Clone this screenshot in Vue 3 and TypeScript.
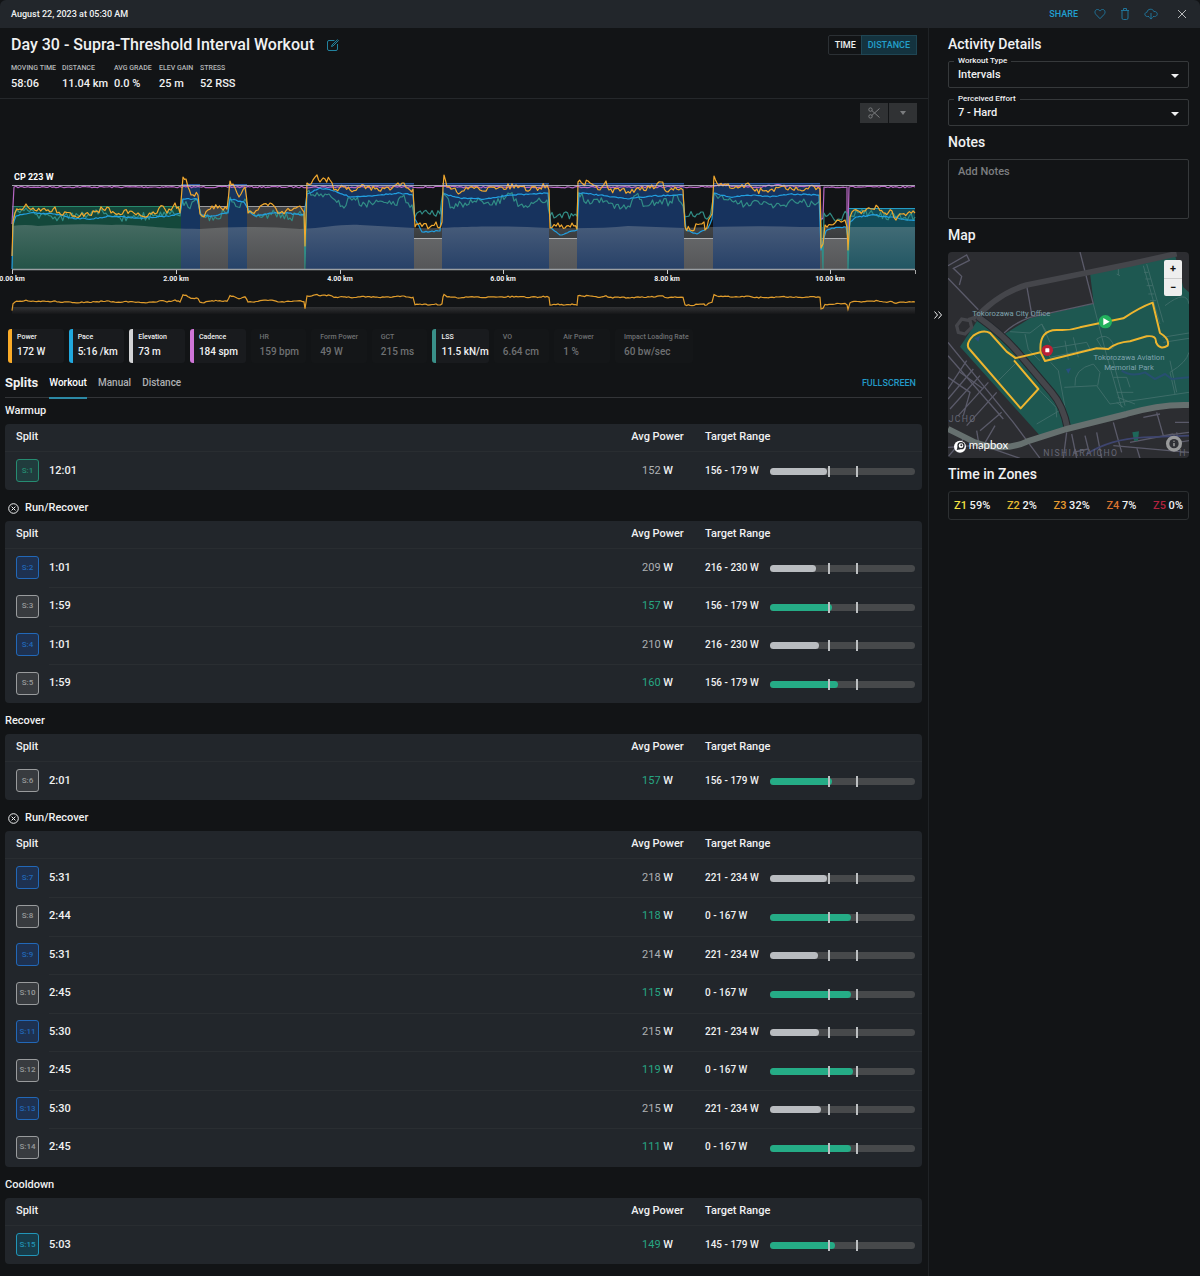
<script setup lang="ts">
import { ref } from 'vue'

type Point = [number, number]
interface Split { id: number; kind: 'green' | 'blue' | 'grey' | 'cyan'; time: string; power: number; hit: boolean; range: string; fill: number }
interface Group { name: string; repeat?: boolean; splits: Split[] }

const s = (id: number, kind: Split['kind'], time: string, power: number, hit: boolean, range: string, fill: number): Split =>
  ({ id, kind, time, power, hit, range, fill })

const groups: Group[] = [
  { name: 'Warmup', splits: [s(1, 'green', '12:01', 152, false, '156 - 179 W', 39)] },
  { name: 'Run/Recover', repeat: true, splits: [
    s(2, 'blue', '1:01', 209, false, '216 - 230 W', 32),
    s(3, 'grey', '1:59', 157, true, '156 - 179 W', 43),
    s(4, 'blue', '1:01', 210, false, '216 - 230 W', 34),
    s(5, 'grey', '1:59', 160, true, '156 - 179 W', 47)] },
  { name: 'Recover', splits: [s(6, 'grey', '2:01', 157, true, '156 - 179 W', 43)] },
  { name: 'Run/Recover', repeat: true, splits: [
    s(7, 'blue', '5:31', 218, false, '221 - 234 W', 39),
    s(8, 'grey', '2:44', 118, true, '0 - 167 W', 56),
    s(9, 'blue', '5:31', 214, false, '221 - 234 W', 33),
    s(10, 'grey', '2:45', 115, true, '0 - 167 W', 56),
    s(11, 'blue', '5:30', 215, false, '221 - 234 W', 34),
    s(12, 'grey', '2:45', 119, true, '0 - 167 W', 57),
    s(13, 'blue', '5:30', 215, false, '221 - 234 W', 35),
    s(14, 'grey', '2:45', 111, true, '0 - 167 W', 56)] },
  { name: 'Cooldown', splits: [s(15, 'cyan', '5:03', 149, true, '145 - 179 W', 45)] },
]

const stats = [['MOVING TIME', '58:06'], ['DISTANCE', '11.04 km'], ['AVG GRADE', '0.0 %'], ['ELEV GAIN', '25 m'], ['STRESS', '52 RSS']]
const metrics = ref([
  { name: 'Power', value: '172 W', color: '#f9ab28' },
  { name: 'Pace', value: '5:16 /km', color: '#21a8de' },
  { name: 'Elevation', value: '73 m', color: '#d3d4d6' },
  { name: 'Cadence', value: '184 spm', color: '#cf75d8' },
  { name: 'HR', value: '159 bpm', color: '' },
  { name: 'Form Power', value: '49 W', color: '' },
  { name: 'GCT', value: '215 ms', color: '' },
  { name: 'LSS', value: '11.5 kN/m', color: '#3a9089' },
  { name: 'VO', value: '6.64 cm', color: '' },
  { name: 'Air Power', value: '1 %', color: '' },
  { name: 'Impact Loading Rate', value: '60 bw/sec', color: '' },
])
const zones = [['Z1', '59%', '#f5e342'], ['Z2', '2%', '#e6bb32'], ['Z3', '32%', '#e59a31'], ['Z4', '7%', '#d9722f'], ['Z5', '0%', '#b3233f']]
const axis: [string, number][] = [['0.00 km', 12], ['2.00 km', 176], ['4.00 km', 340], ['6.00 km', 503], ['8.00 km', 667], ['10.00 km', 830]]

// Planned workout blocks: start, end, top, fill, top line
const blocks: [number, number, number, string, string][] = [
  [12, 181, 206, '#14483b', '#288a6d'], [181, 200, 184, '#16355f', '#2c569b'], [200, 228, 206, '#414244', '#9b9c9e'],
  [228, 247, 184, '#16355f', '#2c569b'], [247, 305, 206, '#414244', '#9b9c9e'], [306, 414, 183, '#17335e', '#2c569b'],
  [414, 442, 238, '#4a4b4d', '#a7a8aa'], [442, 549, 183, '#17335e', '#2c569b'], [549, 577, 238, '#4a4b4d', '#a7a8aa'],
  [577, 684, 183, '#17335e', '#2c569b'], [684, 713, 238, '#4a4b4d', '#a7a8aa'], [713, 820, 183, '#17335e', '#2c569b'],
  [820, 848, 238, '#4a4b4d', '#a7a8aa'], [848, 915, 208, '#114b59', '#249cc4'],
]

const power: Point[] = [[12, 256], [13, 222], [15, 213], [20, 209], [26, 204], [33, 208], [50, 212], [55, 207], [57, 213], [80, 216], [95, 212], [107, 207], [111, 213], [130, 211], [140, 215], [155, 214], [163, 206], [167, 213], [175, 203], [180, 213], [183, 177], [186, 179], [188, 187], [191, 195], [198, 195], [200, 214], [204, 217], [212, 206], [227, 209], [230, 181], [233, 184], [239, 197], [245, 187], [248, 213], [258, 210], [270, 203], [280, 213], [300, 206], [304, 212], [305, 246], [307, 183], [311, 184], [317, 175], [320, 182], [325, 179], [330, 180], [334, 190], [345, 187], [350, 190], [360, 187], [375, 189], [390, 190], [402, 183], [410, 190], [413, 189], [415, 227], [420, 223], [430, 227], [436, 222], [439, 228], [442, 222], [443, 188], [444, 175], [447, 187], [455, 188], [460, 193], [470, 187], [480, 190], [500, 187], [520, 186], [530, 190], [547, 185], [549, 190], [550, 228], [558, 223], [565, 228], [572, 223], [577, 229], [578, 182], [583, 184], [588, 181], [600, 190], [606, 181], [609, 190], [620, 191], [640, 190], [650, 188], [661, 182], [668, 192], [675, 187], [683, 190], [685, 227], [690, 230], [700, 224], [704, 222], [705, 230], [712, 214], [714, 176], [717, 183], [725, 184], [730, 188], [740, 187], [748, 183], [755, 191], [770, 190], [780, 187], [800, 190], [810, 186], [820, 189], [821, 248], [823, 244], [825, 225], [835, 223], [845, 220], [847, 227], [848, 250], [850, 217], [852, 212], [865, 211], [878, 207], [885, 213], [892, 211], [896, 220], [902, 214], [915, 213]]
const pace: Point[] = [[12, 269], [13, 225], [16, 216], [30, 213], [55, 214], [70, 218], [92, 219], [110, 216], [140, 218], [170, 216], [180, 213], [183, 199], [197, 199], [201, 215], [212, 216], [228, 213], [230, 199], [244, 202], [249, 211], [255, 216], [270, 213], [285, 213], [304, 215], [307, 194], [320, 188], [335, 191], [350, 197], [380, 195], [400, 193], [413, 195], [415, 219], [422, 232], [440, 231], [443, 194], [460, 198], [485, 199], [510, 195], [548, 193], [551, 228], [560, 235], [577, 230], [579, 193], [600, 195], [628, 199], [650, 196], [683, 195], [686, 230], [697, 234], [708, 228], [712, 219], [714, 193], [730, 197], [755, 195], [770, 197], [790, 194], [819, 195], [821, 250], [826, 231], [832, 228], [846, 227], [848, 238], [850, 222], [856, 217], [875, 215], [890, 217], [908, 220], [915, 220]]
const lss: Point[] = [[13, 220], [18, 211], [26, 208], [35, 214], [55, 217], [80, 216], [96, 210], [108, 216], [130, 218], [155, 215], [164, 212], [180, 216], [182, 199], [188, 207], [194, 201], [198, 201], [202, 217], [215, 217], [228, 211], [230, 197], [238, 207], [245, 199], [249, 213], [260, 217], [275, 213], [290, 218], [304, 214], [305, 269], [307, 192], [325, 194], [335, 200], [344, 208], [350, 198], [365, 204], [380, 201], [395, 205], [402, 197], [412, 205], [415, 217], [422, 214], [440, 214], [443, 192], [452, 207], [465, 203], [480, 200], [490, 205], [510, 194], [520, 205], [535, 202], [547, 200], [550, 216], [560, 214], [577, 216], [578, 192], [590, 204], [605, 201], [620, 209], [630, 207], [636, 195], [645, 206], [660, 200], [672, 203], [675, 195], [683, 206], [685, 217], [697, 214], [709, 217], [712, 205], [714, 193], [728, 200], [745, 205], [760, 204], [775, 206], [788, 203], [800, 201], [815, 205], [820, 200], [823, 269], [824, 213], [838, 219], [847, 214], [848, 269], [850, 216], [860, 212], [875, 215], [890, 216], [915, 217]]
const cadence: Point[] = [[12, 224], [14, 187], [713, 187], [720, 184], [730, 186], [760, 187], [775, 185], [798, 187], [820, 186], [821, 220], [823, 218], [824, 187], [847, 187], [847, 229], [848, 229], [849, 187], [915, 187]]

function trace(keys: Point[], amplitude: number, seed: number): Point[] {
  let state = seed
  const rand = () => {
    state = (state * 16807) % 2147483647
    return state / 2147483647 - 0.5
  }
  const out: Point[] = [keys[0]]
  for (let i = 1; i < keys.length; i++) {
    const [x0, y0] = keys[i - 1]
    const [x1, y1] = keys[i]
    const n = Math.max(1, Math.round((x1 - x0) / 2))
    for (let k = 1; k < n; k++) {
      const t = k / n
      out.push([x0 + (x1 - x0) * t, y0 + (y1 - y0) * t + rand() * amplitude * 2])
    }
    out.push([x1, y1])
  }
  return out
}
const line = (points: Point[]) => points.map(([x, y]) => `${x.toFixed(1)},${y.toFixed(1)}`).join(' ')

const powerTrace = trace(power, 2.8, 41)
const overview = powerTrace.map(([x, y]): Point => [x, 302 + (y - 213) * 0.2])
const traces = [
  { color: '#b766c4', points: line(trace(cadence, 0.8, 7)) },
  { color: '#318d86', points: line(trace(lss, 4, 99)) },
  { color: '#229fe0', points: line(trace(pace, 0.6, 12)) },
  { color: '#f2a92e', points: line(powerTrace) },
]
const hill = 'M12 226 Q25 224 38 226 Q75 223 112 225 C140 224 155 229 200 229 Q245 225 300 229 C325 228 340 224 360 225 L414 228 C450 229 470 224 549 228 Q600 229 628 226 L684 228 Q750 225 800 227 L915 227 V269 H12Z'

const tabs = ['Workout', 'Manual', 'Distance']
const tab = ref('Workout')
const mode = ref('DISTANCE')
const workoutType = ref('Intervals')
const effort = ref('7 - Hard')
</script>

<template>
  <div class="app">
    <header class="topbar">
      <time>August 22, 2023 at 05:30 AM</time>
      <div class="actions">
        <button class="share">SHARE</button>
        <button aria-label="Favourite"><svg width="12" height="12" viewBox="0 0 12 12"><path d="M6 10.7 1.8 6.3C.2 4.500 1 1.500 3.400 1.500 4.700 1.500 5.500 2.300 6 3.100 6.500 2.300 7.300 1.500 8.600 1.500 11 1.500 11.800 4.500 10.200 6.300Z" /></svg></button>
        <button aria-label="Delete"><svg width="12" height="14" viewBox="0 0 12 14"><path d="M2 3.500h8M3 3.500v7.500q0 1.500 1.500 1.500h3q1.500 0 1.500-1.500V3.500M4.500 3.300V1.500h3v1.800" /></svg></button>
        <button aria-label="Download"><svg width="14" height="12" viewBox="0 0 14 12"><path d="M5 8.500H3.500C.2 8.500 0 4.500 3 4.300 3.300.5 9 .2 9.800 3.500 14 3 14.500 8.500 10.500 8.500H9M7 5v6M5.300 9.400 7 11.100l1.700-1.700" /></svg></button>
        <button class="close" aria-label="Close"><svg width="12" height="12" viewBox="0 0 12 12"><path d="m2 2 8 8M10 2 2 10" /></svg></button>
      </div>
    </header>

    <div class="body">
      <main>
        <section class="summary">
          <div class="titles">
            <h1>Day 30 - Supra-Threshold Interval Workout
              <button aria-label="Edit title"><svg width="12" height="12" viewBox="0 0 12 12"><path d="M7.500 1.500H2Q.5 1.500.5 3v7Q.5 11.500 2 11.500h7Q10.500 11.500 10.500 10V5M4.500 7.500 5 6l5.500-5.300.9.900L6 7Z" /></svg></button>
            </h1>
            <dl>
              <div v-for="[label, value] in stats" :key="label"><dt>{{ label }}</dt><dd>{{ value }}</dd></div>
            </dl>
          </div>
          <div class="toggle">
            <button v-for="m in ['TIME', 'DISTANCE']" :key="m" :class="{ on: mode === m }" @click="mode = m">{{ m }}</button>
          </div>
        </section>

        <div class="tools">
          <button aria-label="Cut"><svg width="12" height="12" viewBox="0 0 12 12"><circle cx="2.500" cy="2.600" r="1.700" /><circle cx="2.500" cy="9.400" r="1.700" /><path d="M3.900 3.600 11.500 10.500M3.900 8.400 11.500 1.500" /></svg></button>
          <button aria-label="More"><i class="caret"></i></button>
        </div>

        <svg class="chart" viewBox="0 124 928 192" role="img" aria-label="Workout chart">
          <defs>
            <linearGradient id="hill" x1="0" y1="0" x2="0" y2="1"><stop offset="0" stop-color="#b8bcbc" stop-opacity=".3" /><stop offset="1" stop-color="#b8bcbc" stop-opacity=".1" /></linearGradient>
            <linearGradient id="floor" x1="0" y1="0" x2="0" y2="1"><stop offset="0" stop-color="#323335" /><stop offset="1" stop-color="#151618" /></linearGradient>
          </defs>
          <g v-for="b in blocks" :key="b[0]">
            <rect :x="b[0]" :y="b[2]" :width="b[1] - b[0]" :height="269 - b[2]" :fill="b[3]" />
            <rect :x="b[0]" :y="b[2]" :width="b[1] - b[0]" height="1" :fill="b[4]" />
          </g>
          <path :d="hill" fill="url(#hill)" />
          <polyline v-for="t in traces" :key="t.color" :points="t.points" :stroke="t.color" fill="none" stroke-width="1.200" stroke-linejoin="round" />
          <path d="M12 185.500H915" stroke="#c4c3d0" stroke-opacity=".8" />
          <path d="M12 269.500H915" stroke="#9a9fa3" stroke-width="1.500" />
          <path d="M915.500 270v4" stroke="#aaa" />
          <g v-for="[label, x] in axis" :key="label">
            <path :d="`M${x + 0.5} 270v4`" stroke="#ccc" />
            <text :x="x" y="281" text-anchor="middle" class="tick">{{ label }}</text>
          </g>
          <text x="14" y="180" class="cp">CP 223 W</text>
          <rect x="12" y="307" width="903" height="7" fill="url(#floor)" />
          <polyline :points="line(overview)" fill="none" stroke="#e19d2c" stroke-width="1.200" />
        </svg>

        <div class="metrics">
          <button v-for="m in metrics" :key="m.name" :class="{ off: !m.color }" :style="{ borderLeftColor: m.color || 'transparent' }">
            <small>{{ m.name }}</small><span>{{ m.value }}</span>
          </button>
        </div>

        <nav class="tabs">
          <h2>Splits</h2>
          <button v-for="t in tabs" :key="t" :class="{ on: tab === t }" @click="tab = t">{{ t }}</button>
          <button class="full">FULLSCREEN</button>
        </nav>

        <section v-for="(g, i) in groups" :key="i" class="group">
          <h3>
            <svg v-if="g.repeat" width="11" height="11" viewBox="0 0 11 11"><circle cx="5.500" cy="5.500" r="4.800" /><path d="m3.600 3.600 3.800 3.800M7.400 3.600 3.600 7.400" /></svg>{{ g.name }}
          </h3>
          <table>
            <colgroup><col class="w-id"><col><col class="w-power"><col class="w-range"><col class="w-bar"></colgroup>
            <thead><tr><th class="c-id">Split</th><th></th><th class="c-power">Avg Power</th><th class="c-range" colspan="2">Target Range</th></tr></thead>
            <tbody>
              <tr v-for="r in g.splits" :key="r.id">
                <td class="c-id"><span class="badge" :class="r.kind">S:{{ r.id }}</span></td>
                <td>{{ r.time }}</td>
                <td class="c-power"><span :class="r.hit ? 'hit' : 'miss'">{{ r.power }}</span> W</td>
                <td class="c-range">{{ r.range }}</td>
                <td class="c-bar"><div class="bar"><div class="fill" :class="{ ok: r.hit }" :style="{ width: r.fill + '%' }"></div><i class="low"></i><i class="high"></i></div></td>
              </tr>
            </tbody>
          </table>
        </section>
      </main>

      <aside>
        <button class="collapse" aria-label="Collapse panel"><svg width="10" height="10" viewBox="0 0 10 10"><path d="m1.500 1.500 3 3.500-3 3.500M5.500 1.500l3 3.500-3 3.500" /></svg></button>
        <h2>Activity Details</h2>
        <div class="field">
          <label for="type">Workout Type</label>
          <select id="type" v-model="workoutType"><option>Intervals</option></select><i class="caret"></i>
        </div>
        <div class="field">
          <label for="effort">Perceived Effort</label>
          <select id="effort" v-model="effort"><option>7 - Hard</option></select><i class="caret"></i>
        </div>
        <h2><label for="notes">Notes</label></h2>
        <textarea id="notes" placeholder="Add Notes"></textarea>
        <h2>Map</h2>
        <div class="map">
          <svg viewBox="54 19 723 619" role="img" aria-label="Route map">
            <rect x="54" y="19" width="723" height="619" fill="#2c2d31" />
            <path d="M480 82 735 28 760 125 777 140V470L660 490 550 515 410 555 330 570 90 303 145 220 215 270 300 218 491 173Z" fill="#1e5851" />
            <g fill="none" stroke="#5a5a69" stroke-width="4">
              <path d="M54 98 145 192 M54 60 110 28 118 44 70 68 95 92 88 118 M290 120 306 210 M450 19 490 175 M215 270Q245 235 300 215L491 173 M54 290 250 530 330 638 M54 330 220 520" />
              <path d="M54 430 110 345M54 460 130 370M60 490 150 390M85 510 175 410M110 540 200 440M150 555 215 500M54 395 120 440 100 510M90 380 160 430 M140 555 150 615 M195 540 160 600 270 638 M54 605 130 600 M100 580 50 638" />
              <path d="M425 565 440 638 M410 560 400 638 M465 570 475 610 430 620 M550 530 575 620 M680 500 700 570 777 560 M640 515 690 505 M735 530H777 M740 560 745 590 777 585 M500 560 515 638 M600 590 730 565 M620 605 630 638 M720 570 730 610 M550 600 777 620" />
            </g>
            <g fill="none" stroke="#45716e" stroke-width="2.500">
              <path d="M240 258 300 262 335 235 360 290M285 265 295 312 330 345M335 235 350 260M362 350 385 375 405 485 320 535M205 405 255 355M325 430 378 485 380 515M403 425 500 420 540 475 777 440M490 175 530 330M640 60 690 235M650 55 700 230M642 80H655M646 100H662M650 120H668M655 145H673M660 165H678M350 310 470 290 480 310 360 335ZM430 275 445 335M405 285 415 342M500 280Q530 260 547 290T515 305ZM435 420Q430 370 490 355L510 380 503 420M530 330 575 485M545 330 585 480M560 85 570 90M565 65V88M705 180Q770 130 777 175M697 275 777 262M700 290 777 278M720 345 740 440M735 445 720 380Q770 350 777 320M550 395H590L600 425M560 440H610M563 455 615 475M560 470 580 485" />
            </g>
            <path d="M575 375q30 20 70 5l30 20 30-15 20 15 52-5" fill="none" stroke="#274f70" stroke-width="6" />
            <path d="m408 370 15-2-8 16z M133 278l18-8-6 18z" fill="#294f82" />
            <path d="m607 560 20-3-3 28h-12z" fill="#1e675a" />
            <path d="M470 625Q540 580 640 575L777 570" fill="none" stroke="#3e456f" stroke-width="5" />
            <path d="M130 225Q200 145 290 118L600 55 740 24" fill="none" stroke="#45464b" stroke-width="17" />
            <path d="M80 240 95 220 120 225 125 245 105 265 85 260Z M115 222 142 213" fill="none" stroke="#45464b" stroke-width="10" />
            <path d="M143 213Q230 275 280 340L365 440Q400 480 413 550" fill="none" stroke="#25282d" stroke-width="23" /><path d="M143 213Q230 275 280 340L365 440Q400 480 413 550" fill="none" stroke="#45464b" stroke-width="17" />
            <path d="M54 550 135 590Q220 620 290 588L410 550 590 505Q690 475 777 478" fill="none" stroke="#66706f" stroke-width="18" />
            <path d="M253 338 332 320M258 338 230 318 180 262Q158 250 130 270 105 295 118 310L272 488 325 430 252 344M332 320Q325 250 385 253 420 255 450 245L525 229 580 218Q630 185 668 171L690 262Q720 280 713 300 690 315 678 290 680 268 650 272L600 287Q560 290 535 310L500 308 345 346 332 320" fill="none" stroke="#edb52f" stroke-width="6" stroke-linejoin="round" />
            <circle cx="526" cy="228" r="20" fill="#22b15d" /><path d="m520 217 19 11-19 11z" fill="#fff" />
            <circle cx="352" cy="314" r="17" fill="#bc1f35" /><rect x="346" y="308" width="12" height="12" rx="2" fill="#fff" />
            <g class="places">
              <text x="244" y="210">Tokorozawa City Office</text>
              <text x="597" y="342">Tokorozawa Aviation</text>
              <text x="597" y="372">Memorial Park</text>
            </g>
            <g class="towns"><text x="56" y="530">JCHO</text><text x="340" y="631">NISHIARAICHO</text><text x="748" y="631">H</text></g>
            <circle cx="90" cy="603" r="18" fill="#fff" /><circle cx="93" cy="600" r="9" fill="none" stroke="#25282c" stroke-width="4" /><path d="m80 613 3-10 8 8z" fill="#25282c" /><circle cx="94" cy="599" r="3" fill="#25282c" />
            <text x="116" y="611" class="brand">mapbox</text>
            <circle cx="732" cy="594" r="24" fill="#999a9b" /><circle cx="732" cy="594" r="14" fill="#303136" /><path d="M732 585v3M732 592v10" stroke="#aaa" stroke-width="4" />
          </svg>
          <div class="zoom"><button aria-label="Zoom in">+</button><button aria-label="Zoom out">−</button></div>
        </div>
        <h2>Time in Zones</h2>
        <div class="zones"><span v-for="[z, v, c] in zones" :key="z"><b :style="{ color: c }">{{ z }}</b> {{ v }}</span></div>
      </aside>
    </div>
  </div>
</template>

<style>
body { margin: 0; background: #111315; }
</style>

<style scoped>
* { box-sizing: border-box; }
.app { color: #f0f1f2; font: 500 11px/14px Roboto, "Liberation Sans", sans-serif; background: #121416; }
h1, h2, h3, dl, dd { margin: 0; font-weight: 500; }
button { padding: 0; border: 0; background: none; color: inherit; font: inherit; cursor: pointer; }
svg { display: block; }
button svg, h3 svg { fill: none; stroke: currentColor; stroke-width: 1; }
.topbar { display: flex; align-items: center; justify-content: space-between; height: 28px; padding: 0 12px 0 11px; background: #22262b; border-radius: 6px 6px 0 0; font-size: 9px; }
.actions { display: flex; align-items: center; gap: 13px; color: #20749a; }
.share { color: #219fd0; margin-right: 3px; }
.close { color: #b6b8ba; margin-left: 5px; }
.body { display: flex; }
main { flex: 1; min-width: 0; padding-bottom: 13px; }

.summary { display: flex; justify-content: space-between; height: 71px; padding: 7px 11px 0; border-bottom: 1px solid #25282b; }
h1 { display: flex; align-items: center; gap: 13px; font-size: 16px; line-height: 20px; }
h1 button { color: #23839f; }
dl { display: grid; grid-template-columns: 51px 52px 45px 41px auto; margin-top: 8px; }
dt { font-size: 7px; line-height: 10px; color: #b4b6b8; white-space: nowrap; }
dd { margin-top: 4px; }
.toggle { display: flex; height: 20px; border: 1px solid #2b3034; border-radius: 2px; font-size: 9px; }
.toggle button { padding: 0 6px; }
.toggle .on { background: #14333f; color: #23a0cb; box-shadow: 0 0 0 1px #1f4654; }
.tools { display: flex; justify-content: flex-end; gap: 1px; padding: 4px 11px 0; }
.tools button { display: grid; place-items: center; width: 28px; height: 20px; background: #303234; color: #7b7d7f; }
.caret { width: 0; height: 0; border: 3px solid transparent; border-top: 4px solid currentColor; border-bottom: 0; }
.chart { width: 100%; height: auto; margin-top: 1px; }
.tick { fill: #f0f1f2; font: 700 7px Roboto, sans-serif; }
.cp { fill: #fff; font: 700 9px Roboto, sans-serif; }

.metrics { display: grid; grid-template-columns: repeat(10, 1fr) 78px; gap: 5px; width: 685px; max-width: 100%; margin: 13px 0 0 8px; }
.metrics button { display: flex; flex-direction: column; gap: 3px; height: 34px; padding: 3px 0 0 5px; border-left: 4px solid; border-radius: 3px; background: #191b1e; text-align: left; white-space: nowrap; font-size: 10px; }
.metrics small { font-size: 7px; line-height: 10px; }
.metrics .off { color: #6f7173; background: #141618; }

.tabs { display: flex; align-items: stretch; gap: 11px; height: 29px; margin: 6px 6px 0 5px; border-bottom: 1px solid #333538; }
.tabs h2 { font-size: 13px; font-weight: 700; line-height: 28px; }
.tabs button { height: 30px; font-size: 10px; color: #aeb0b2; border-bottom: 2px solid transparent; }
.tabs button.on { color: #fff; border-color: #2c89a5; }
.tabs .full { margin-left: auto; margin-right: 6px; color: #2399c6; font-size: 9px; }

.group { margin: 6px 6px 11px 5px; }
.group h3 { display: flex; align-items: center; gap: 6px; height: 14px; margin-bottom: 6px; font-size: 11px; }
.group h3 svg { margin-left: 3px; }
table { width: 100%; border-spacing: 0; table-layout: fixed; background: #22262b; border-radius: 4px; }
th { height: 28px; padding: 0 0 2px; text-align: left; font-weight: 500; border-bottom: 1px solid #292d31; }
td { height: 38px; padding: 0 0 2px; border-top: 1px solid #2a2e32; }
tr:nth-child(even) td { height: 39px; }
tbody tr:first-child td, td.c-id { border-top-color: transparent; }
.w-id { width: 44px; }
.w-power { width: 73px; }
.w-range { width: 76px; }
.w-bar { width: 152px; }
.c-id { padding-left: 11px; }
.c-power { text-align: center; white-space: nowrap; }
.c-range { padding-left: 11px; white-space: nowrap; }
td.c-range { font-size: 10px; }
td.c-bar { padding: 0 7px 0 0; }
.badge { display: flex; align-items: center; justify-content: center; width: 23px; height: 23px; border: 1px solid; border-radius: 3px; font-size: 8px; }
.green { color: #268c72; background: #203c3d; }
.blue { color: #2268b8; background: #1e3150; }
.grey { color: #999b9d; background: #383b3f; }
.cyan { color: #2295b8; background: #173b49; }
.hit { color: #27a783; font-weight: 400; }
.miss { color: #adb0b3; font-weight: 400; }
.bar { position: relative; height: 7px; border-radius: 4px; background: #47494b; }
.fill { height: 7px; border-radius: 4px; background: #b9bcc0; }
.fill.ok { background: #25ac86; }
.bar i { position: absolute; top: -2px; width: 2px; height: 11px; background: #bdc0c2; }
.low { left: 40%; }
.high { left: 59%; }

aside { position: relative; width: 272px; padding: 0 11px 0 19px; border-left: 1px solid #202326; }
.collapse { position: absolute; left: 4px; top: 282px; }
aside h2 { margin: 8px 0 9px; font-size: 14px; line-height: 16px; }
.field { position: relative; height: 27px; border: 1px solid #36393b; border-radius: 2px; }
.field + .field { margin-top: 11px; }
.field label { position: absolute; left: 5px; top: -7px; padding: 0 4px; background: #121416; font-size: 8px; line-height: 12px; }
.field select { appearance: none; display: block; width: 100%; height: 25px; padding: 0 9px; border: 0; background: none; color: inherit; font: inherit; }
.field .caret { position: absolute; right: 9px; top: 12px; pointer-events: none; border-width: 4px 4px 0; }
textarea { display: block; width: 100%; height: 60px; padding: 5px 9px; resize: none; background: none; border: 1px solid #36393b; border-radius: 2px; color: inherit; font: inherit; }
textarea::placeholder { color: #7c7e80; opacity: 1; }
.map { position: relative; border-radius: 4px; overflow: hidden; }
.map > svg { width: 100%; height: auto; }
.places { fill: #7fa3ad; font: 400 23px Roboto, sans-serif; text-anchor: middle; }
.towns { fill: #656775; font: 400 26px Roboto, sans-serif; letter-spacing: 4px; }
.brand { fill: #fff; font: 400 34px Lato, sans-serif; }
.zoom { position: absolute; top: 8px; right: 7px; display: grid; width: 18px; background: #eee; border-radius: 2px; color: #111; font-weight: 700; }
.zoom button { height: 18px; }
.zoom button + button { border-top: 1px solid #ccc; }
.zones { display: flex; justify-content: space-between; align-items: center; height: 29px; padding: 0 5px; border: 1px solid #2d3032; border-radius: 3px; }
.zones b { font-weight: 500; }
</style>
